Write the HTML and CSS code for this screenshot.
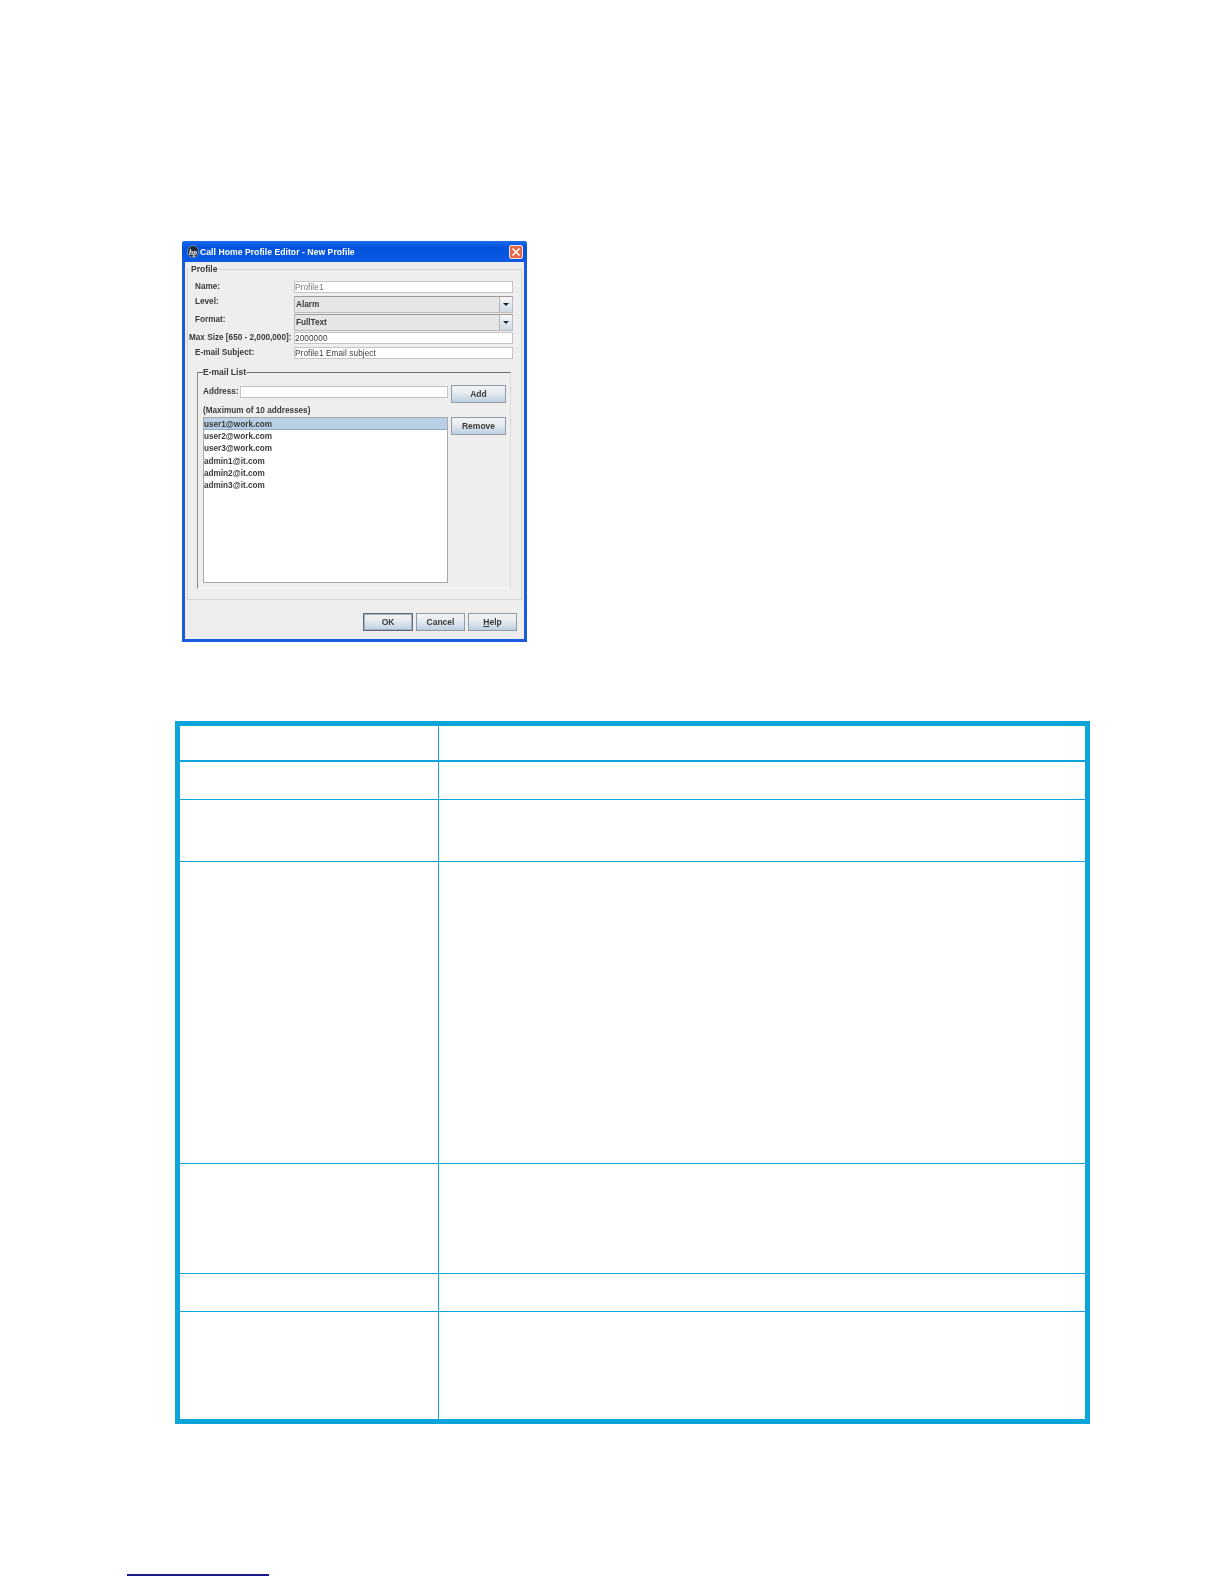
FILE: index.html
```html
<!DOCTYPE html>
<html lang="en">
<head>
  <meta charset="UTF-8">
  <title>Call Home Profile Editor</title>
  <link rel="stylesheet" href="styles.css">
</head>
<body>

<!-- Dialog screenshot -->
<div class="dialog">
  <div class="titlebar">
    <svg class="hp-logo" width="12" height="13" viewBox="0 0 12 13">
      <ellipse cx="6" cy="6.5" rx="5.6" ry="6" fill="#1c2a3a" stroke="#c8d4e8" stroke-width="0.5"/>
      <text x="6" y="9.5" text-anchor="middle" class="hp-text">hp</text>
    </svg>
    <span class="title-text">Call Home Profile Editor - New Profile</span>
    <span class="close-btn">
      <svg width="12" height="12" viewBox="0 0 12 12">
        <path d="M2.5 2.5 L9.5 9.5 M9.5 2.5 L2.5 9.5" stroke="#fff" stroke-width="1.6" fill="none"/>
      </svg>
    </span>
  </div>

  <div class="dialog-body">
    <fieldset class="profile">
      <legend>Profile</legend>

      <div class="form-grid">
        <label class="field-label">Name:</label>
        <div class="text-input muted">Profile1</div>

        <label class="field-label">Level:</label>
        <div class="combo">
          <span class="combo-value">Alarm</span>
          <span class="combo-arrow"></span>
        </div>

        <label class="field-label">Format:</label>
        <div class="combo">
          <span class="combo-value">FullText</span>
          <span class="combo-arrow"></span>
        </div>

        <label class="field-label wide">Max Size [650 - 2,000,000]:</label>
        <div class="text-input">2000000</div>

        <label class="field-label">E-mail Subject:</label>
        <div class="text-input">Profile1 Email subject</div>
      </div>

      <fieldset class="email-list">
        <legend>E-mail List</legend>
        <div class="email-columns">
          <div class="email-main">
            <div class="address-row">
              <label class="field-label flat">Address:</label>
              <div class="text-input address-input"></div>
            </div>
            <div class="max-note">(Maximum of 10 addresses)</div>
            <ul class="address-list">
              <li class="selected">user1@work.com</li>
              <li>user2@work.com</li>
              <li>user3@work.com</li>
              <li>admin1@it.com</li>
              <li>admin2@it.com</li>
              <li>admin3@it.com</li>
            </ul>
          </div>
          <div class="email-side">
            <button type="button" class="btn">Add</button>
            <button type="button" class="btn remove">Remove</button>
          </div>
        </div>
      </fieldset>
    </fieldset>

    <div class="actions">
      <button type="button" class="btn default">OK</button>
      <button type="button" class="btn">Cancel</button>
      <button type="button" class="btn"><u>H</u>elp</button>
    </div>
  </div>
</div>

<!-- Field table -->
<table class="fields">
  <tr class="row-a"><td class="col-name"></td><td></td></tr>
  <tr class="row-b"><td></td><td></td></tr>
  <tr class="row-c"><td></td><td></td></tr>
  <tr class="row-d"><td></td><td></td></tr>
  <tr class="row-e"><td></td><td></td></tr>
  <tr class="row-g"><td></td><td></td></tr>
  <tr class="row-f"><td></td><td></td></tr>
</table>

<div class="footer-link"></div>

</body>
</html>
```

FILE: styles.css
```css
* {
  box-sizing: border-box;
}

body {
  margin: 0;
  height: 1584px;
  background: #fff;
  font-family: "Liberation Sans", Arial, sans-serif;
  overflow: hidden;
}

/* Dialog window */
.dialog {
  width: 345px;
  height: 401px;
  margin: 241px 0 0 182px;
  display: flex;
  flex-direction: column;
  border: 3px solid #1a5ce0;
  border-top: 0;
  border-radius: 3px 3px 0 0;
  background: #eee;
  font-size: 8.2px;
  color: #3a3a3a;
  filter: blur(0.4px);
}

.titlebar {
  display: flex;
  align-items: center;
  height: 21px;
  flex-shrink: 0;
  margin: 0 -3px;
  padding: 0 4px 0 5px;
  background: linear-gradient(#1a6cf0, #0553dc 30%, #0a5ae6);
  border-radius: 3px 3px 0 0;
}

.hp-logo {
  margin-right: 1px;
  flex-shrink: 0;
}

.hp-text {
  font: italic bold 7.5px "Liberation Serif", serif;
  fill: #fff;
}

.title-text {
  flex: 1;
  color: #fff;
  font-size: 8.6px;
  font-weight: bold;
  letter-spacing: 0.05px;
}

.close-btn {
  display: flex;
  width: 14px;
  height: 14px;
  border: 1px solid #f3e4dc;
  border-radius: 2px;
  background: #e4674a;
}

.dialog-body {
  flex: 1;
  display: flex;
  flex-direction: column;
  padding: 2px 2px 0 2px;
}

/* Profile group */
.profile {
  height: 336px;
  margin: 0;
  padding: 6px 7px 0 1px;
  border: 1px solid #d4d4d4;
  min-width: 0;
}

.profile > legend {
  margin-left: 1px;
  padding: 0 2px 0 1px;
  font-size: 8.5px;
  font-weight: bold;
  line-height: 11px;
}

.form-grid {
  display: grid;
  grid-template-columns: 105px 219px;
  grid-template-rows: 14px 17px 17px 14px 12px;
  row-gap: 1px;
}

.field-label {
  padding-left: 6px;
  font-weight: bold;
  line-height: 11px;
  white-space: nowrap;
}

.field-label.wide {
  padding-left: 0;
}

.field-label.flat {
  padding-left: 0;
}

.text-input {
  height: 12px;
  padding-left: 0;
  border: 1px solid #c4c4c4;
  background: #fff;
  font-size: 8.2px;
  line-height: 11px;
  letter-spacing: 0.1px;
  color: #3a3a3a;
  white-space: nowrap;
}

.text-input.muted {
  color: #777;
}

.combo {
  display: flex;
  height: 17px;
  border: 1px solid #bbb;
  border-top-color: #999;
  background: #e6e6e6;
}

.combo-value {
  flex: 1;
  padding-left: 1px;
  font-weight: bold;
  line-height: 15px;
}

.combo-arrow {
  width: 13px;
  display: flex;
  align-items: center;
  justify-content: center;
  border-left: 1px solid #b4b4b4;
  background: linear-gradient(#f6f7f9, #ccd9e6);
}

.combo-arrow::before {
  content: "";
  border-left: 3.5px solid transparent;
  border-right: 3.5px solid transparent;
  border-top: 3.5px solid #222;
}

/* E-mail list group */
.email-list {
  height: 222px;
  margin: 8px 3px 0 8px;
  padding: 7px 4px 5px 5px;
  border: 1px solid #ddd;
  border-top-color: #6e6e6e;
  border-left-color: #8a8a8a;
  border-bottom-color: #fafafa;
  min-width: 0;
}

.email-list > legend {
  margin-left: 0;
  padding: 0;
  font-size: 8.5px;
  font-weight: bold;
  line-height: 11px;
}

.email-columns {
  display: flex;
  gap: 3px;
  height: 100%;
}

.email-main {
  width: 245px;
  display: flex;
  flex-direction: column;
}

.address-row {
  display: flex;
  align-items: center;
  justify-content: space-between;
  height: 13px;
}

.address-input {
  width: 208px;
}

.max-note {
  margin-top: 7px;
  font-weight: bold;
  line-height: 11px;
}

.address-list {
  flex: 1;
  margin: 1px 0 0 0;
  padding: 0;
  list-style: none;
  border: 1px solid #a8a8a8;
  background: #fff;
}

.address-list li {
  height: 12.2px;
  line-height: 13px;
  font-weight: bold;
  padding-left: 0;
}

.address-list .selected {
  background: #b8cfe5;
  border-bottom: 1px solid #8fa9c4;
}

.email-side {
  width: 55px;
  display: flex;
  flex-direction: column;
}

/* Buttons */
.btn {
  width: 100%;
  height: 18px;
  padding: 0;
  border: 1px solid #8e9aa6;
  background: linear-gradient(#f2f3f5, #e8ecf0 40%, #bccfe0);
  font-family: inherit;
  font-size: 8.5px;
  font-weight: bold;
  color: #3a3a3a;
}

.btn.remove {
  margin-top: 14px;
}

.btn.default {
  border: 1px solid #5d6b7a;
  box-shadow: inset 0 0 0 1px #a4b4c4;
}

.actions {
  display: flex;
  justify-content: flex-end;
  gap: 3px;
  padding: 13px 5px 0 0;
}

.actions .btn {
  width: 49px;
}

.actions .btn.default {
  width: 50px;
}

/* Field table */
.fields {
  width: 915px;
  margin: 79px 0 0 175px;
  border-collapse: collapse;
  border: 5px solid #0ca4d9;
  table-layout: fixed;
}

.fields td {
  padding: 0;
  border: 1px solid #0ca4d9;
}

.col-name {
  width: 261px;
}

.row-a td {
  height: 37px;
  border-bottom-width: 2px;
}

.row-b td {
  height: 39px;
}

.row-c td {
  height: 62px;
}

.row-d td {
  height: 302px;
}

.row-e td {
  height: 110px;
}

.row-g td {
  height: 38px;
}

.row-f td {
  height: 110px;
}

.footer-link {
  width: 142px;
  height: 2px;
  margin: 150px 0 0 127px;
  background: #1a1a8c;
}
```
